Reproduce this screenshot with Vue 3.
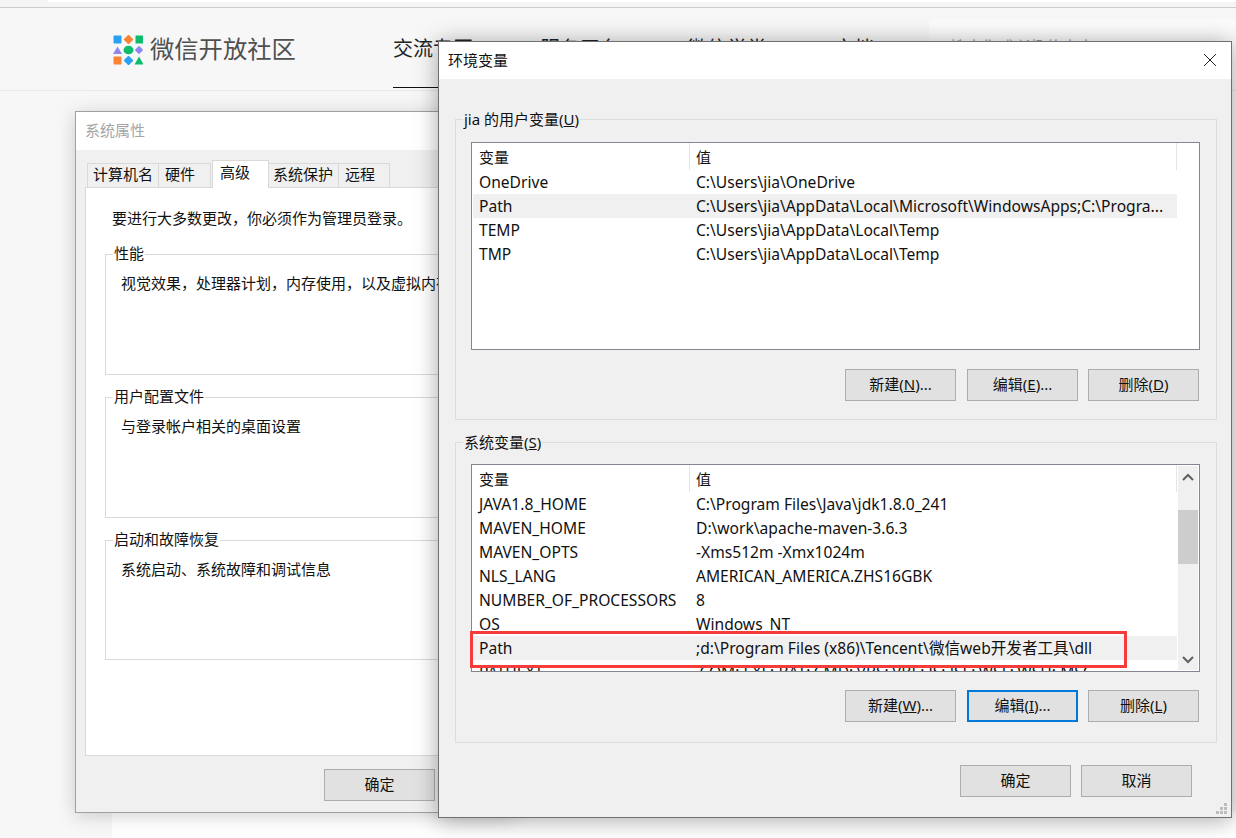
<script setup>
const userVars = [
  { n: 'OneDrive', v: 'C:\\Users\\jia\\OneDrive' },
  { n: 'Path', v: 'C:\\Users\\jia\\AppData\\Local\\Microsoft\\WindowsApps;C:\\Progra...', sel: true },
  { n: 'TEMP', v: 'C:\\Users\\jia\\AppData\\Local\\Temp' },
  { n: 'TMP', v: 'C:\\Users\\jia\\AppData\\Local\\Temp' },
]
const sysVars = [
  { n: 'JAVA1.8_HOME', v: 'C:\\Program Files\\Java\\jdk1.8.0_241' },
  { n: 'MAVEN_HOME', v: 'D:\\work\\apache-maven-3.6.3' },
  { n: 'MAVEN_OPTS', v: '-Xms512m -Xmx1024m' },
  { n: 'NLS_LANG', v: 'AMERICAN_AMERICA.ZHS16GBK' },
  { n: 'NUMBER_OF_PROCESSORS', v: '8' },
  { n: 'OS', v: 'Windows_NT' },
  { n: 'Path', v: ';d:\\Program Files (x86)\\Tencent\\微信web开发者工具\\dll', sel: true },
  { n: 'PATHEXT', v: '.COM;.EXE;.BAT;.CMD;.VBS;.VBE;.JS;.JSE;.WSF;.WSH;.MSC' },
]
const tabs = [
  { t: '计算机名', w: 72, p: 5 },
  { t: '硬件', w: 52, p: 6 },
  { t: '高级', w: 57, p: 7, on: true },
  { t: '系统保护', w: 70, p: 4 },
  { t: '远程', w: 51, p: 6 },
]
const groups = [
  { title: '性能', text: '视觉效果，处理器计划，内存使用，以及虚拟内存', h: 121 },
  { title: '用户配置文件', text: '与登录帐户相关的桌面设置', h: 121 },
  { title: '启动和故障恢复', text: '系统启动、系统故障和调试信息', h: 120 },
]
const navs = ['交流专区', '服务平台', '微信学堂', '文档']
</script>

<template>
  <div class="desk">
    <div class="chrome"><div class="chrome-white"></div></div>
    <header class="site">
      <div class="logo">
        <svg width="30" height="30" viewBox="0 0 30 30">
          <rect x="0.5" y="0.5" width="8" height="8" rx="1" fill="#2aa0f5" />
          <rect x="12" y="1" width="7" height="7" rx="1" fill="#f98434" transform="rotate(45 15.5 4.5)" />
          <rect x="22.5" y="0.5" width="7.5" height="8" fill="#0dbd6c" />
          <path d="M4.5 11.5 L9 19 H0 Z" fill="#8f86f0" />
          <ellipse cx="15.5" cy="15" rx="5" ry="4.3" fill="#0dbd6c" />
          <rect x="23" y="12" width="6" height="6" rx="1" fill="#8f86f0" transform="rotate(45 26 15)" />
          <rect x="0.5" y="21.5" width="8" height="8" rx="1" fill="#f98434" />
          <rect x="12" y="22" width="7" height="7" rx="1" fill="#2aa0f5" transform="rotate(45 15.5 25.5)" />
          <path d="M26 21.5 L30.5 29.5 H21.5 Z" fill="#0dbd6c" />
        </svg>
        <span class="logo-text">微信开放社区</span>
      </div>
      <nav class="nav">
        <a v-for="(n, i) in navs" :key="n" class="nav-item" :class="{ active: i === 0 }">{{ n }}</a>
      </nav>
      <div class="search">搜索你感兴趣的内容</div>
    </header>
    <div class="page-bottom"></div>

    <section class="win win-back">
      <div class="title title-dim">系统属性</div>
      <div class="back-body">
        <div class="tabs">
          <span v-for="t in tabs" :key="t.t" class="tab" :class="{ on: t.on }" :style="{ width: t.w + 'px', paddingLeft: t.p + 'px' }">{{ t.t }}</span>
        </div>
        <div class="panel">
          <p class="notice">要进行大多数更改，你必须作为管理员登录。</p>
          <div v-for="g in groups" :key="g.title" class="sub" :style="{ height: g.h + 'px' }">
            <span class="sub-legend">{{ g.title }}</span>
            <p class="sub-text">{{ g.text }}</p>
          </div>
        </div>
        <div class="back-foot"><button class="btn">确定</button></div>
      </div>
    </section>

    <section class="win win-front">
      <div class="title">
        <span>环境变量</span>
        <svg class="close" width="14" height="14" viewBox="0 0 14 14"><path d="M1 1 L13 13 M13 1 L1 13" stroke="#222" stroke-width="1" fill="none" /></svg>
      </div>
      <div class="front-body">
        <div class="group">
          <span class="legend">jia 的用户变量(<u>U</u>)</span>
          <div class="list">
            <div class="list-main">
              <div class="row head"><span class="c1">变量</span><span class="c2">值</span></div>
              <div v-for="r in userVars" :key="r.n" class="row" :class="{ sel: r.sel }">
                <span class="c1">{{ r.n }}</span><span class="c2">{{ r.v }}</span>
              </div>
            </div>
          </div>
          <div class="btns">
            <button class="btn">新建(<u>N</u>)...</button>
            <button class="btn">编辑(<u>E</u>)...</button>
            <button class="btn">删除(<u>D</u>)</button>
          </div>
        </div>
        <div class="group second">
          <span class="legend">系统变量(<u>S</u>)</span>
          <div class="list">
            <div class="list-main">
              <div class="row head"><span class="c1">变量</span><span class="c2">值</span></div>
              <div v-for="r in sysVars" :key="r.n" class="row" :class="{ sel: r.sel }">
                <span class="c1">{{ r.n }}</span><span class="c2">{{ r.v }}</span>
              </div>
            </div>
            <div class="scroll">
              <svg width="20" height="22" viewBox="0 0 20 22"><path d="M5 14 L10 9 L15 14" stroke="#606060" stroke-width="2" fill="none" /></svg>
              <div class="track"><div class="thumb"></div></div>
              <svg width="20" height="22" viewBox="0 0 20 22"><path d="M5 9 L10 14 L15 9" stroke="#606060" stroke-width="2" fill="none" /></svg>
            </div>
            <div class="mark"></div>
          </div>
          <div class="btns">
            <button class="btn">新建(<u>W</u>)...</button>
            <button class="btn focus">编辑(<u>I</u>)...</button>
            <button class="btn">删除(<u>L</u>)</button>
          </div>
        </div>
        <div class="foot">
          <button class="btn">确定</button>
          <button class="btn">取消</button>
        </div>
        <svg class="grip" width="12" height="12" viewBox="0 0 12 12" fill="#bdbdbd">
          <rect x="8" y="0" width="3" height="3" /><rect x="4" y="4" width="3" height="3" /><rect x="8" y="4" width="3" height="3" />
          <rect x="0" y="8" width="3" height="3" /><rect x="4" y="8" width="3" height="3" /><rect x="8" y="8" width="3" height="3" />
        </svg>
      </div>
    </section>
  </div>
</template>

<style scoped>
.desk {
  position: relative;
  width: 1236px;
  height: 838px;
  overflow: hidden;
  background: #f7f7f7;
  font-family: "Noto Sans", "Noto Sans CJK SC", sans-serif;
  font-size: 15px;
  color: #111;
}
.chrome { height: 7px; background: #f5f5f5; border-bottom: 1px solid #ccc; }
.chrome-white { margin-left: 48px; height: 2px; background: #fff; }
.site {
  height: 82px;
  border-bottom: 1px solid #e9e9e9;
  display: flex;
  align-items: flex-start;
  box-sizing: content-box;
}
.logo { display: flex; align-items: center; gap: 7px; margin: 27px 0 0 113px; width: 280px; }
.logo-text { font-size: 24.3px; line-height: 30px; margin-top: -4px; color: #505050; font-family: "Noto Sans CJK SC", sans-serif; }
.nav { display: flex; gap: 67px; margin-top: 26px; }
.nav-item { font-size: 20px; line-height: 28px; height: 53px; color: #222; font-family: "Noto Sans CJK SC", sans-serif; box-sizing: border-box; }
.nav-item.active { border-bottom: 1px solid #111; height: 54px; }
.search {
  position: absolute;
  left: 929px;
  top: 19px;
  width: 307px;
  height: 60px;
  background: #fbfbfb;
  border-radius: 6px 0 0 6px;
  padding: 15px 0 0 21px;
  box-sizing: border-box;
  font-size: 16px;
  line-height: 24px;
  color: #999;
  font-family: "Noto Sans CJK SC", sans-serif;
}
.page-bottom { position: absolute; left: 112px; right: 0; top: 812px; bottom: 0; background: #fff; }

.win { position: absolute; box-sizing: border-box; background: #f0f0f0; }
.win-back {
  left: 75px;
  top: 111px;
  width: 440px;
  height: 702px;
  border: 1px solid #a0a0a0;
  box-shadow: 0 3px 18px rgba(0, 0, 0, 0.18);
}
.win-front {
  left: 438px;
  top: 41px;
  width: 794px;
  height: 777px;
  border: 1px solid #707070;
  box-shadow: 0 2px 22px rgba(0, 0, 0, 0.35);
}
.title {
  height: 37px;
  background: #fff;
  display: flex;
  align-items: center;
  justify-content: space-between;
  padding: 0 14px 2px 9px;
  box-sizing: border-box;
  font-family: "Noto Sans CJK SC", sans-serif;
  font-size: 15px;
}
.title-dim { color: #a5a5a5; height: 38px; padding-bottom: 4px; }
.back-body { height: 662px; padding: 11px 0 0 9px; box-sizing: border-box; }
.tabs { display: flex; align-items: flex-end; height: 26px; padding-left: 2px; position: relative; z-index: 1; }
.tab {
  box-sizing: border-box;
  height: 24px;
  border: 1px solid #d9d9d9;
  border-bottom: none;
  border-left-width: 0;
  background: #f0f0f0;
  line-height: 20px;
  font-family: "Noto Sans CJK SC", sans-serif;
  font-size: 15px;
}
.tab:first-child { border-left-width: 1px; }
.tab.on { height: 28px; background: #fff; border-left-width: 1px; line-height: 22px; margin: 0 0 -1px 1px; position: relative; }
.panel {
  height: 569px;
  background: #fff;
  border: 1px solid #d9d9d9;
  box-sizing: border-box;
  padding: 0 0 0 19px;
  font-family: "Noto Sans CJK SC", sans-serif;
  font-size: 15px;
}
.notice { margin: 20px 0 26px 7px; line-height: 20px; white-space: nowrap; }
.sub {
  position: relative;
  border: 1px solid #d9d9d9;
  box-sizing: border-box;
  width: 400px;
  margin-bottom: 22px;
}
.sub-legend { position: absolute; left: 7px; top: -12px; background: #fff; padding: 0 1px; line-height: 20px; }
.sub-text { margin: 18px 0 0 15px; line-height: 20px; white-space: nowrap; }
.back-foot { padding: 13px 0 0 239px; }

.front-body { position: relative; height: 738px; padding: 40px 14px 0 16px; box-sizing: border-box; }
.group {
  position: relative;
  height: 301px;
  border: 1px solid #dcdcdc;
  box-sizing: border-box;
  padding: 22px 15px 0;
  margin-bottom: 22px;
}
.group.second { padding-top: 21px; }
.group.second .btns { margin-top: 18px; }
.legend {
  position: absolute;
  left: 7px;
  top: -11px;
  background: #f0f0f0;
  padding: 0 1px;
  line-height: 20px;
  font-size: 15px;
}
.list {
  position: relative;
  display: flex;
  height: 208px;
  width: 729px;
  background: #fff;
  border: 1px solid #828790;
  box-sizing: border-box;
}
.list-main { width: 705px; height: 206px; overflow: hidden; padding-left: 1px; box-sizing: border-box; }
.row { display: flex; height: 24px; line-height: 24px; white-space: nowrap; font-size: 15.6px; }
.row.sel { background: #f0f0f0; }
.row.head { height: 27px; line-height: 28px; font-size: 15px; width: 704px; border-right: 1px solid #e5e5e5; box-sizing: border-box; }
.c1 { width: 217px; padding-left: 6px; box-sizing: border-box; }
.c2 { padding-left: 6px; }
.head .c1 { border-right: 1px solid #e5e5e5; }
.scroll { width: 20px; margin: 1px 0 0 1px; display: flex; flex-direction: column; background: #f0f0f0; height: 204px; }
.track { flex: 1; }
.thumb { height: 54px; margin-top: 22px; background: #cdcdcd; }
.mark {
  position: absolute;
  left: -2px;
  top: 166px;
  width: 657px;
  height: 37px;
  border: 3px solid #f63b3b;
  box-sizing: border-box;
}
.btns { display: flex; justify-content: flex-end; gap: 10px; margin-top: 19px; margin-right: 2px; }
.btns .btn:first-child { margin-right: 1px; }
.btn {
  width: 111px;
  height: 32px;
  padding: 0 0 4px;
  background: #e1e1e1;
  border: 1px solid #adadad;
  color: #111;
  font: inherit;
  font-size: 15px;
  box-sizing: border-box;
}
.btn.focus { border: 2px solid #0078d7; }
.foot { display: flex; justify-content: flex-end; gap: 10px; margin-right: 25px; }
.grip { position: absolute; right: 3px; bottom: 2px; }
</style>
